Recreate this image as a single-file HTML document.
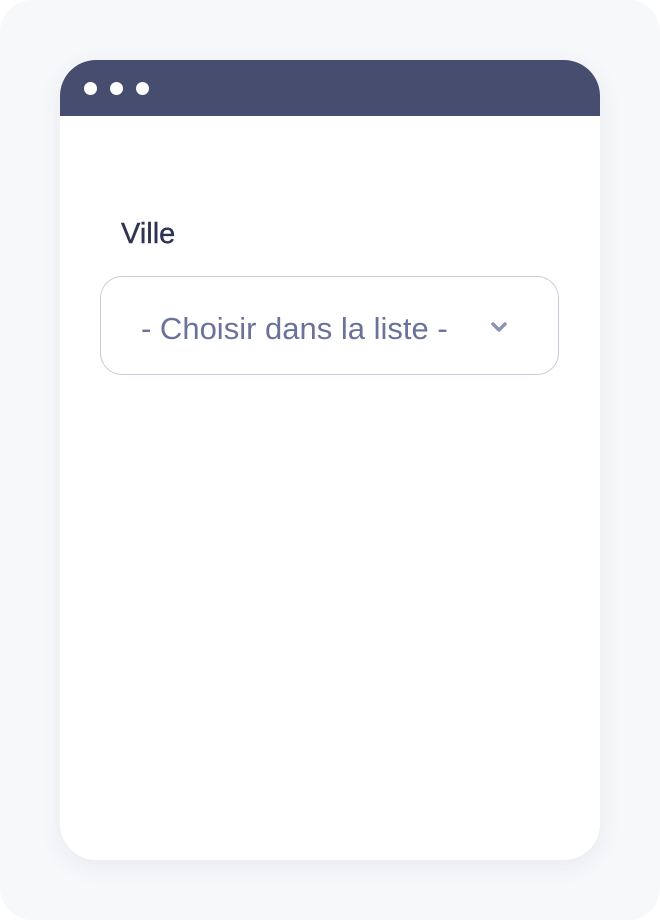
<!DOCTYPE html>
<html><head><style>
html,body{margin:0;padding:0;background:#fff;}
.bg{position:absolute;left:0;top:0;width:660px;height:920px;background:#f7f8fa;border-radius:32px;}
.card{position:absolute;left:60px;top:60px;width:540px;height:800px;background:#fff;border-radius:36px;overflow:hidden;box-shadow:0 6px 24px rgba(60,70,110,0.08);}
.hdr{height:56px;background:#464d6e;position:relative;}
.dot{position:absolute;top:22px;width:13px;height:13px;border-radius:50%;background:#fff;}
.lbl{position:absolute;left:61px;top:158px;font:29px "Liberation Sans",sans-serif;color:#2f3452;-webkit-text-stroke:0.4px #2f3452;}
.sel{position:absolute;left:40px;top:216px;width:457px;height:97px;border:1.5px solid #c9c9dc;border-radius:22px;}
.txt{position:absolute;left:40px;top:34px;font:31px "Liberation Sans",sans-serif;color:#6a7299;white-space:nowrap;}
svg{position:absolute;left:389px;top:44px;}
</style></head><body>
<div class="bg"></div>
<div class="card">
<div class="hdr"><div class="dot" style="left:24px"></div><div class="dot" style="left:50px"></div><div class="dot" style="left:76px"></div></div>
<div class="lbl">Ville</div>
<div class="sel"><div class="txt">- Choisir dans la liste -</div>
<svg width="18" height="12" viewBox="0 0 18 12"><path d="M3 3 L9 9 L15 3" stroke="#8c93b5" stroke-width="3.5" fill="none" stroke-linecap="round" stroke-linejoin="round"/></svg></div>
</div>
</body></html>
